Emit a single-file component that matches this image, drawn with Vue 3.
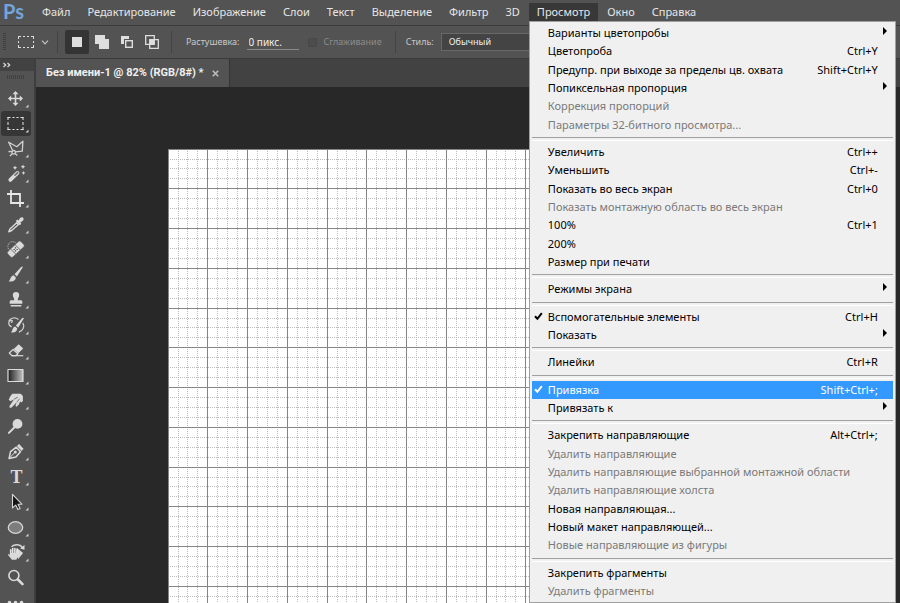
<script setup>
import { ref } from 'vue'

const menus = [
  'Файл', 'Редактирование', 'Изображение', 'Слои', 'Текст', 'Выделение',
  'Фильтр', '3D', 'Просмотр', 'Окно', 'Справка',
]
const openMenu = ref('Просмотр')

const groups = [
  [
    { label: 'Варианты цветопробы', sub: true },
    { label: 'Цветопроба', keys: 'Ctrl+Y' },
    { label: 'Предупр. при выходе за пределы цв. охвата', keys: 'Shift+Ctrl+Y' },
    { label: 'Попиксельная пропорция', sub: true },
    { label: 'Коррекция пропорций', off: true },
    { label: 'Параметры 32-битного просмотра...', off: true },
  ],
  [
    { label: 'Увеличить', keys: 'Ctrl++' },
    { label: 'Уменьшить', keys: 'Ctrl+-' },
    { label: 'Показать во весь экран', keys: 'Ctrl+0' },
    { label: 'Показать монтажную область во весь экран', off: true },
    { label: '100%', keys: 'Ctrl+1' },
    { label: '200%' },
    { label: 'Размер при печати' },
  ],
  [{ label: 'Режимы экрана', sub: true }],
  [
    { label: 'Вспомогательные элементы', keys: 'Ctrl+H', checked: true },
    { label: 'Показать', sub: true },
  ],
  [{ label: 'Линейки', keys: 'Ctrl+R' }],
  [
    { label: 'Привязка', keys: 'Shift+Ctrl+;', checked: true, active: true },
    { label: 'Привязать к', sub: true },
  ],
  [
    { label: 'Закрепить направляющие', keys: 'Alt+Ctrl+;' },
    { label: 'Удалить направляющие', off: true },
    { label: 'Удалить направляющие выбранной монтажной области', off: true },
    { label: 'Удалить направляющие холста', off: true },
    { label: 'Новая направляющая...' },
    { label: 'Новый макет направляющей...' },
    { label: 'Новые направляющие из фигуры', off: true },
  ],
  [
    { label: 'Закрепить фрагменты' },
    { label: 'Удалить фрагменты', off: true },
  ],
]

const toolGroups = [
  ['move', 'marquee', 'lasso', 'wand', 'crop'],
  ['eyedropper', 'heal', 'brush', 'stamp'],
  ['history', 'eraser', 'gradient', 'smudge'],
  ['dodge', 'pen', 'type', 'select'],
  ['ellipse', 'rotate', 'zoom', 'more'],
]
const activeTool = ref('marquee')
const feather = ref('0 пикс.')

// Four subdivisions per major grid cell, at 82% zoom.
const cell = 39.75
const gridLines = Array.from({ length: 160 }, (_, i) => ({
  pos: Math.round((i * cell) / 4 - 0.4 + (i === 0 ? 0.4 : 0)) + 0.5,
  major: i % 4 === 0,
}))
const minor = gridLines.filter((l) => !l.major)
const major = gridLines.filter((l) => l.major)
</script>

<template>
  <div class="app">
    <header class="menubar">
      <span class="logo">Ps</span>
      <nav class="menus">
        <div v-for="m in menus" :key="m" class="menu-slot">
          <button type="button" class="menu-btn" :class="{ open: m === openMenu }" @click="openMenu = m">{{ m }}</button>
          <div v-if="m === 'Просмотр' && openMenu === m" class="dropdown" role="menu">
            <template v-for="(g, gi) in groups" :key="gi">
              <div v-if="gi" class="sep" role="separator"></div>
              <button
                v-for="it in g"
                :key="it.label"
                type="button"
                role="menuitem"
                class="item"
                :class="{ active: it.active }"
                :disabled="it.off"
              >
                <span class="mark">
                  <svg v-if="it.checked" width="9" height="9" viewBox="0 0 9 9"><path d="M1 4.2L3.4 6.8L7.8 1.2" fill="none" stroke="currentColor" stroke-width="2" /></svg>
                </span>
                <span class="label">{{ it.label }}</span>
                <span v-if="it.keys" class="keys">{{ it.keys }}</span>
                <svg v-if="it.sub" class="arrow" width="4" height="8" viewBox="0 0 4 8"><path d="M0 0L4 4L0 8Z" fill="currentColor" /></svg>
              </button>
            </template>
          </div>
        </div>
      </nav>
    </header>

    <div class="options">
      <span class="grip-v"></span>
      <button type="button" class="preset" aria-label="Прямоугольная область">
        <svg width="18" height="14" viewBox="0 0 18 14" fill="none" stroke="#dcdcdc">
          <path d="M1 1.5H17M1 12.5H17" stroke-dasharray="3 2 2 2 2 2 3" />
          <path d="M1.5 1V13M16.5 1V13" stroke-dasharray="3 2 2 2 3" />
        </svg>
        <svg width="8" height="5" viewBox="0 0 8 5"><path d="M1 .7L4 3.8L7 .7" fill="none" stroke="#c4c4c4" stroke-width="1.2" /></svg>
      </button>
      <span class="divider"></span>
      <div class="modes">
        <button type="button" class="mode on" aria-label="Новая область">
          <svg width="14" height="14" viewBox="0 0 14 14"><rect x="2" y="2" width="10" height="10" fill="#dedede" /></svg>
        </button>
        <button type="button" class="mode" aria-label="Добавить">
          <svg width="14" height="14" viewBox="0 0 14 14"><path d="M0 0H10V4H14V14H4V9H0Z" fill="#dedede" /></svg>
        </button>
        <button type="button" class="mode" aria-label="Вычесть">
          <svg width="14" height="14" viewBox="0 0 14 14"><path d="M1 1H9V4H4V9H1Z" fill="#dedede" /><rect x="5.7" y="5.7" width="6.6" height="6.6" fill="none" stroke="#dedede" stroke-width="1.4" /></svg>
        </button>
        <button type="button" class="mode" aria-label="Пересечение">
          <svg width="14" height="14" viewBox="0 0 14 14"><path d="M.7.7H9.3V9.3H.7ZM4.7 4.7H13.3V13.3H4.7Z" fill="none" stroke="#dedede" stroke-width="1.3" /><rect x="5" y="5" width="4" height="4" fill="#dedede" /></svg>
        </button>
      </div>
      <span class="divider"></span>
      <label class="field feather">Растушевка: <input v-model="feather" type="text" /></label>
      <label class="field smooth"><input type="checkbox" disabled />Сглаживание</label>
      <span class="divider"></span>
      <label class="field style">Стиль:
        <select>
          <option>Обычный</option>
        </select>
      </label>
    </div>

    <div class="workspace">
      <aside class="tools">
        <div class="tools-head">
          <svg width="8" height="6" viewBox="0 0 8 6"><path d="M.5 1L2.7 3L.5 5M4.5 1L6.7 3L4.5 5" fill="none" stroke="#dcdcdc" stroke-width="1.2" /></svg>
        </div>
        <div class="grip-h"></div>
        <div v-for="(tg, ti) in toolGroups" :key="ti" class="tool-group">
          <button
            v-for="t in tg"
            :key="t"
            type="button"
            class="tool"
            :class="{ on: t === activeTool }"
            :aria-label="t"
            @click="activeTool = t"
          >
            <svg width="30" height="25" viewBox="0 0 30 25">
              <g transform="translate(14.5 12.5)" fill="#dadada" stroke-linejoin="round">
                <path v-if="t === 'move'" d="M0-7.5L3-4.3H.8V-.8H4.3V-3L7.5 0L4.3 3V.8H.8V4.3H3L0 7.5L-3 4.3H-.8V.8H-4.3V3L-7.5 0L-4.3-3V-.8H-.8V-4.3H-3Z" />
                <g v-else-if="t === 'marquee'" fill="none" stroke="#e6e6e6">
                  <path d="M-8-6H8M-8 6H8" stroke-dasharray="3 2 2 2 2 2 3" />
                  <path d="M-7.5-6.5V6.5M7.5-6.5V6.5" stroke-dasharray="3 2 3 2 3" />
                </g>
                <g v-else-if="t === 'lasso'" fill="none" stroke="#d0d0d0" stroke-width="1.3">
                  <path d="M-2.5 2.8L-6.8-6.3L1.3-1.8L7.4-7.3L6.8 2.6L-.2 3.4" />
                  <circle cx="-1.8" cy="3.8" r="1.8" />
                  <path d="M-3.2 3.2L-7 3M-3 5L-5.6 7.4M-.4 5L1.8 7" />
                </g>
                <g v-else-if="t === 'wand'">
                  <path d="M-5.2 6.4L2-.6" stroke="#dadada" stroke-width="3.8" stroke-linecap="round" />
                  <path d="M-.6 1.8L2.2-.9" stroke="#6a6a6a" stroke-width="1.5" stroke-linecap="round" />
                  <path d="M-.5-8L.2-6.5L1.7-5.8L.2-5.1L-.5-3.6L-1.2-5.1L-2.7-5.8L-1.2-6.5ZM7.5-9L8.2-7.4L9.8-6.7L8.2-6L7.5-4.4L6.8-6L5.2-6.7L6.8-7.4ZM8-2.6L8.6-1.2L10-.6L8.6 0L8 1.4L7.4 0L6-.6L7.4-1.2Z" />
                </g>
                <path v-else-if="t === 'crop'" d="M-4.5-8.5V4.5H8.5M-8.5-4.5H4.5V8.5" fill="none" stroke="#e6e6e6" stroke-width="1.8" stroke-linejoin="miter" />
                <g v-else-if="t === 'eyedropper'">
                  <path d="M.3-3.6L1.8-5.1L3-4L4.6-6.4C7-8.6 9.4-5.6 7.4-3.8L4.8-1.9L5.8-.7L4.3 .8Z" />
                  <path d="M1.2-1.8L3 0L-3.8 6L-6.7 7.3L-5.6 4.5Z" fill="none" stroke="#dadada" stroke-width="1.4" />
                </g>
                <g v-else-if="t === 'heal'">
                  <circle cx="-2.8" cy="-3" r="4.8" fill="none" stroke="#d0d0d0" stroke-dasharray="1 1" />
                  <rect x="-8.6" y="-3.7" width="18" height="7.4" rx="1.8" transform="rotate(-43)" stroke="#505050" stroke-width=".4" />
                  <path d="M-4.4-.1L.6 5M-.2-4.6L5 .6" stroke="#505050" stroke-width=".8" />
                  <path d="M0-2.2V-1M0 .8V2M-2 0H-.8M1 0H2.2" stroke="#444" stroke-width="1.2" />
                </g>
                <g v-else-if="t === 'brush'">
                  <path d="M7.4-7.6L1.4 2L-1-.3L5.6-7.6Q7-8.6 7.4-7.6Z" />
                  <path d="M-1.8 .8L.4 3C.2 6.4-3.2 7.8-7 6.8C-4.6 5.8-5.4 1.4-1.8 .8Z" />
                </g>
                <path v-else-if="t === 'stamp'" d="M-1.3 .8C-1-.8-2.7-2.4-2.7-4.4A3.2 3.2 0 0 1 3.7-4.4C3.7-2.4 2-.8 2.3 .8H5.3Q6.8 .8 6.8 2.2V4.3H-5.8V2.2Q-5.8 .8-4.3 .8ZM-4.8 5.5H5.8V6.9H-4.8Z" />
                <g v-else-if="t === 'history'">
                  <path d="M8.4-7.2L2.6 2.2L.4 .1L6.8-7.4Q8-8 8.4-7.2Z" />
                  <path d="M-.3 1L1.8 3.1C1.4 6.2-1.2 7.6-4.6 6.8C-2.6 5.6-3.4 1.8-.3 1Z" />
                  <path d="M-4.6-3.2C-2.6-3-2.8-5.4-4.5-5.2C-8-4.6-7 .8-3.7 1.1M-6.7-4.2C-5.2-8.2 0-8.4 3-6M7.4-2.6C9.4 1.2 7.4 5.4 3.4 6.6" fill="none" stroke="#d0d0d0" stroke-width="1.2" />
                </g>
                <g v-else-if="t === 'eraser'">
                  <path d="M3.2-6.2L7.7-2L2.8 2.8L-1.8-1.4Z" />
                  <path d="M-2.4-1L2.4 3.3L.2 5.2H-3.4L-6.2 2.5Z" fill="none" stroke="#dadada" stroke-width="1.2" />
                  <path d="M-4 5.2H7.8" stroke="#dadada" stroke-width="1.2" />
                </g>
                <g v-else-if="t === 'gradient'">
                  <rect x="-7.5" y="-6" width="15" height="12" fill="url(#ramp)" stroke="#dcdcdc" stroke-width="1.2" />
                </g>
                <g v-else-if="t === 'smudge'">
                  <path d="M-5.5-3.8L-3.2-6.8H5.2L7.4-4.4V.6L5.8 2L4.6 1L3.2 4.2L.6 6.4L0 4.8L1.4 1.6L-3.6 6.8Q-6.6 8.4-6 5.4L-1.4-1.2L-5 .8L-6.8-.8Z" />
                  <path d="M-1.2-1.4L2.2-3.2M1.6 1.4L4-1.6" stroke="#555" stroke-width=".8" />
                </g>
                <g v-else-if="t === 'dodge'">
                  <circle cx="2" cy="-2.6" r="4.9" />
                  <path d="M-1.2 1L-6.6 6.4" stroke="#dadada" stroke-width="2" stroke-linecap="round" />
                </g>
                <g v-else-if="t === 'pen'">
                  <path d="M-6.4 7L-5 .2L.8-4.3L5 .3L.4 5.6Z" fill="none" stroke="#dadada" stroke-width="1.5" />
                  <path d="M1.4-5.6L3.6-7.6L8-2.8L6.2-.6Z" />
                  <path d="M-6 6.6L-1 1.2" stroke="#dadada" />
                  <circle cx="-.2" cy=".6" r="1.5" />
                </g>
                <text v-else-if="t === 'type'" class="glyph" x="1" y="6" text-anchor="middle">T</text>
                <path v-else-if="t === 'select'" d="M-3-7.2V6.4L.2 3.6L2.4 8L4.6 7L2.5 2.7H6.4Z" fill="#151515" stroke="#d6d6d6" stroke-width="1.1" />
                <ellipse v-else-if="t === 'ellipse'" rx="7.2" ry="5.8" fill="#7d7d7d" stroke="#d6d6d6" stroke-width="1.3" />
                <g v-else-if="t === 'rotate'">
                  <path d="M1.2-4.8L7.6 .6L2.8 6.6L.6 2Z" />
                  <path d="M-4-5.8C-1-8.6 4.6-8.6 7-5" fill="none" stroke="#d6d6d6" stroke-width="1.4" />
                  <path d="M9-7.4V-2.8L4.6-4Z" />
                  <path d="M-4.8 1.4V-2.6M-2.8 .8V-4M-.6 .8V-4M1.6 2V-3" stroke="#e6e6e6" stroke-width="1.6" stroke-linecap="round" />
                  <path d="M-5.6 .6H2.4L3.6 2.2L1.8 5.4L.8 7.2H-3.6L-7.6 2.2L-6.8 1.4L-5.6 2.2Z" />
                </g>
                <g v-else-if="t === 'zoom'" fill="none" stroke="#dadada">
                  <circle cx="-1.6" cy="-2" r="5" stroke-width="1.6" />
                  <path d="M2.4 2L7 6.6" stroke-width="2.6" stroke-linecap="round" />
                </g>
                <g v-else-if="t === 'more'">
                  <circle cx="-6" cy="0" r="1.8" /><circle cx="0" cy="0" r="1.8" /><circle cx="6" cy="0" r="1.8" />
                </g>
              </g>
              <path v-if="t !== 'zoom' && t !== 'more'" d="M27.5 18.5V21.5H24.5Z" fill="#cfcfcf" />
              <defs v-if="t === 'gradient'">
                <linearGradient id="ramp"><stop offset="0" stop-color="#1c1c1c" /><stop offset="1" stop-color="#c4c4c4" /></linearGradient>
              </defs>
            </svg>
          </button>
        </div>
      </aside>

      <main class="document">
        <div class="tabs">
          <div class="tab">
            <span>Без имени-1 @ 82% (RGB/8#) *</span>
            <button type="button" class="close" aria-label="Закрыть">
              <svg width="7" height="7" viewBox="0 0 7 7"><path d="M.8 .8L6.2 6.2M6.2 .8L.8 6.2" stroke="#bdbdbd" stroke-width="1.6" /></svg>
            </button>
          </div>
        </div>
        <div class="stage">
          <svg class="artboard" shape-rendering="crispEdges">
            <rect width="100%" height="100%" fill="#fff" />
            <g stroke="#bcbcbc" stroke-dasharray="1 1">
              <line v-for="l in minor" :key="'v' + l.pos" :x1="l.pos" :x2="l.pos" y1="0" y2="100%" />
              <line v-for="l in minor" :key="'h' + l.pos" :y1="l.pos" :y2="l.pos" x1="0" x2="100%" />
            </g>
            <g stroke="#858585">
              <line v-for="l in major" :key="'V' + l.pos" :x1="l.pos" :x2="l.pos" y1="0" y2="100%" />
              <line v-for="l in major" :key="'H' + l.pos" :y1="l.pos" :y2="l.pos" x1="0" x2="100%" />
            </g>
          </svg>
        </div>
      </main>
    </div>
  </div>
</template>

<style>
body {
  background: #282828;
}
</style>

<style scoped>
.app {
  display: flex;
  flex-direction: column;
  height: 100vh;
  overflow: hidden;
  background: #535353;
  color: #e6e6e6;
  font: 11px/16px "Noto Sans", "Open Sans", sans-serif;
}
* {
  box-sizing: border-box;
}
button,
input,
select {
  margin: 0;
  padding: 0;
  border: 0;
  background: none;
  color: inherit;
  font: inherit;
}
svg {
  display: block;
  flex: none;
}

/* Menu bar */
.menubar {
  display: flex;
  flex: none;
  height: 25px;
}
.logo {
  width: 34px;
  padding-left: 3px;
  color: #74a5dc;
  font: bold 20px/22px Lato, sans-serif;
}
.menus {
  display: flex;
  gap: 1px;
  padding-top: 3px;
}
.menu-slot {
  position: relative;
  height: 18px;
}
.menu-btn {
  height: 18px;
  padding: 0 8px;
  white-space: nowrap;
}
.menu-btn.open {
  background: #383838;
}

/* Dropdown */
.dropdown {
  position: absolute;
  z-index: 5;
  top: 18px;
  left: 0;
  display: flex;
  flex-direction: column;
  width: 367px;
  height: calc(100vh - 21px);
  padding: 2px;
  border: 1px solid #a0a0a0;
  background: #f0f0f0;
  color: #000;
}
.item {
  display: flex;
  flex: 1 1 18px;
  align-items: center;
  min-height: 0;
  padding-right: 15px;
  text-align: left;
  white-space: nowrap;
}
.item:disabled {
  color: #7a7a7a;
}
.item.active {
  background: #3399ff;
  color: #fff;
}
.mark {
  width: 16px;
  padding-left: 2px;
}
.label {
  flex: 1;
}
.arrow {
  margin: 0 -9px 4px 0;
}
.sep {
  flex: none;
  height: 9px;
  padding-top: 3px;
}
.sep::before {
  content: "";
  display: block;
  height: 2px;
  border-top: 1px solid #a0a0a0;
  border-bottom: 1px solid #fff;
}

/* Options bar */
.options {
  display: flex;
  flex: none;
  align-items: center;
  height: 33px;
  padding-left: 3px;
  border-top: 1px solid #3c3c3c;
  font-size: 9px;
}
.grip-v {
  width: 3px;
  height: 18px;
  background: repeating-linear-gradient(#3e3e3e 0 1px, transparent 1px 2px);
}
.preset {
  display: flex;
  align-items: center;
  gap: 6px;
  padding: 0 8px 0 11px;
}
.divider {
  width: 1px;
  height: 22px;
  background: #434343;
}
.modes {
  display: flex;
  gap: 1px;
  padding: 0 7px;
}
.mode {
  display: grid;
  place-items: center;
  width: 24px;
  height: 24px;
  border-radius: 2px;
}
.mode.on {
  background: #343434;
}
.field {
  display: flex;
  align-items: center;
  color: #c8c8c8;
  white-space: nowrap;
}
.feather {
  gap: 7px;
  padding-left: 14px;
}
.feather input {
  width: 52px;
  height: 15px;
  padding-left: 2px;
  border-bottom: 1px solid #8a8a8a;
  color: #f0f0f0;
  font-size: 10px;
}
.smooth {
  gap: 7px;
  padding: 0 13px 0 9px;
  color: #8c8c8c;
}
.smooth input {
  appearance: none;
  width: 9px;
  height: 9px;
  border: 1px solid #474747;
  border-radius: 2px;
  background: #4d4d4d;
}
.style {
  flex: 1;
  gap: 7px;
  padding: 0 4px 0 10px;
}
.style select {
  appearance: none;
  width: 120px;
  height: 18px;
  padding-left: 7px;
  border: 1px solid #686868;
  background: #444;
  color: #f0f0f0;
}

/* Workspace */
.workspace {
  display: flex;
  flex: 1;
  min-height: 0;
  border-top: 1px solid #3a3a3a;
}
.tools {
  flex: none;
  width: 36px;
  overflow: hidden;
  border-right: 2px solid #3e3e3e;
}
.tools-head {
  height: 12px;
  padding: 3px 3px 0;
  background: #424242;
}
.grip-h {
  width: 18px;
  height: 4px;
  margin: 4px 0 7px 7px;
  background: repeating-linear-gradient(90deg, #404040 0 1px, transparent 1px 2px);
}
.tool-group {
  display: flex;
  flex-direction: column;
  margin-bottom: 1px;
  padding-left: 1px;
}
.tool {
  width: 30px;
  height: 25px;
  border-radius: 3px;
}
.tool.on {
  background: #363636;
}
.glyph {
  font: bold 18px "Liberation Serif", serif;
}
.document {
  display: flex;
  flex: 1;
  flex-direction: column;
  min-width: 0;
  background: #282828;
}
.tabs {
  display: flex;
  flex: none;
  height: 28px;
  background: #424242;
}
.tab {
  display: flex;
  align-items: center;
  gap: 8px;
  padding: 0 10px;
  border-right: 1px solid #353535;
  background: #535353;
  color: #f0f0f0;
  font: bold 11px/16px Roboto, sans-serif;
  white-space: nowrap;
}
.stage {
  display: flex;
  flex: 1;
  min-height: 0;
  padding: 62px 0 0 132px;
}
.artboard {
  flex: 1;
  min-width: 0;
  height: 100%;
  margin-right: 4px;
}
</style>
